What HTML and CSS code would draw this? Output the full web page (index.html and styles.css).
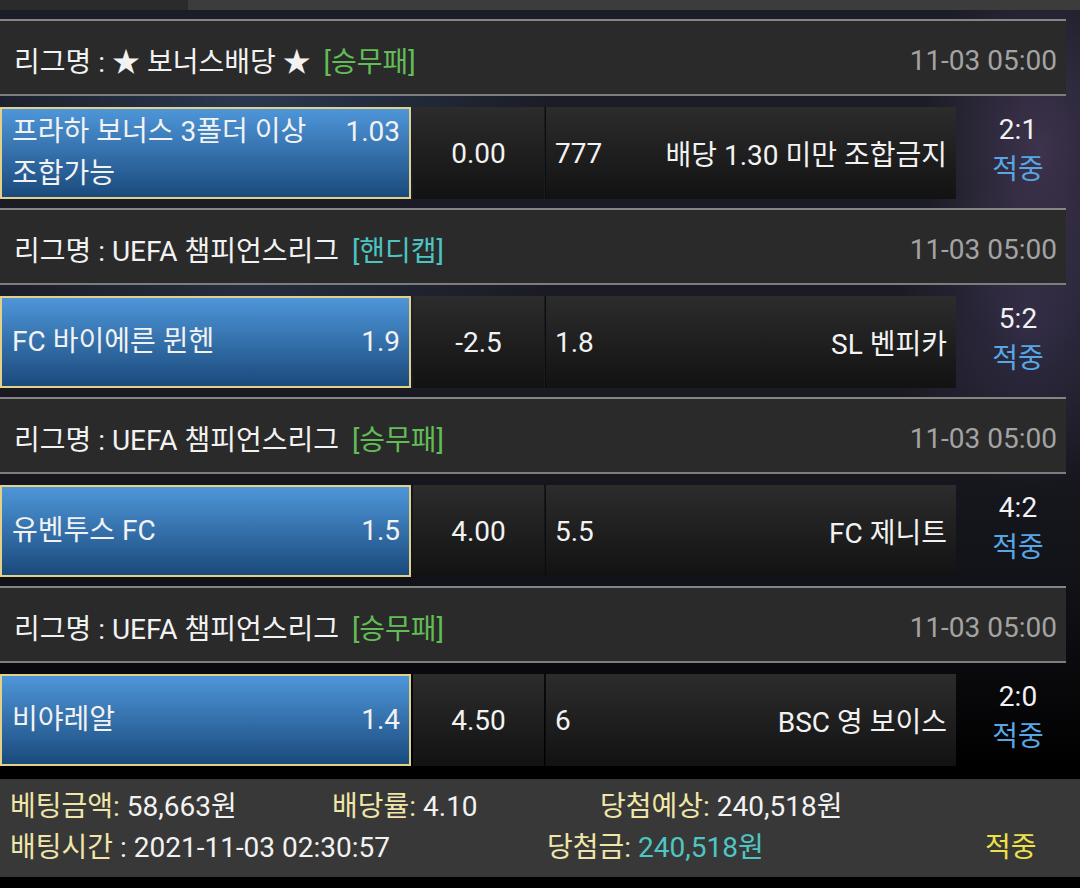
FILE: index.html
```html
<!DOCTYPE html>
<html lang="ko">
<head>
<meta charset="utf-8">
<title>베팅내역</title>
<link rel="stylesheet" href="styles.css">
</head>
<body>
<div class="topbar"><div class="tb-left"></div><div class="tb-right"></div></div>
<div class="list">
  <section class="game">
    <div class="league"><span class="lname">리그명 : ★ 보너스배당 ★ <span class="type green">[승무패]</span></span><span class="time">11-03 05:00</span></div>
    <div class="row">
      <div class="pick"><div class="pick-text"><span class="odds">1.03</span>프라하 보너스 3폴더 이상 조합가능</div></div>
      <div class="cell mid">0.00</div>
      <div class="cell away"><span>777</span><span>배당 1.30 미만 조합금지</span></div>
      <div class="result"><div>2:1</div><div class="hit">적중</div></div>
    </div>
  </section>
  <section class="game">
    <div class="league"><span class="lname">리그명 : UEFA 챔피언스리그 <span class="type teal">[핸디캡]</span></span><span class="time">11-03 05:00</span></div>
    <div class="row">
      <div class="pick"><div class="pick-text"><span class="odds">1.9</span>FC 바이에른 뮌헨</div></div>
      <div class="cell mid">-2.5</div>
      <div class="cell away"><span>1.8</span><span>SL 벤피카</span></div>
      <div class="result"><div>5:2</div><div class="hit">적중</div></div>
    </div>
  </section>
  <section class="game">
    <div class="league"><span class="lname">리그명 : UEFA 챔피언스리그 <span class="type green">[승무패]</span></span><span class="time">11-03 05:00</span></div>
    <div class="row">
      <div class="pick"><div class="pick-text"><span class="odds">1.5</span>유벤투스 FC</div></div>
      <div class="cell mid">4.00</div>
      <div class="cell away"><span>5.5</span><span>FC 제니트</span></div>
      <div class="result"><div>4:2</div><div class="hit">적중</div></div>
    </div>
  </section>
  <section class="game">
    <div class="league"><span class="lname">리그명 : UEFA 챔피언스리그 <span class="type green">[승무패]</span></span><span class="time">11-03 05:00</span></div>
    <div class="row">
      <div class="pick"><div class="pick-text"><span class="odds">1.4</span>비야레알</div></div>
      <div class="cell mid">4.50</div>
      <div class="cell away"><span>6</span><span>BSC 영 보이스</span></div>
      <div class="result"><div>2:0</div><div class="hit">적중</div></div>
    </div>
  </section>
</div>
<div class="summary">
  <div class="s-row">
    <div class="s-a1"><span class="lbl">베팅금액:</span> 58,663원</div>
    <div class="s-b1"><span class="lbl">배당률:</span> 4.10</div>
    <div><span class="lbl">당첨예상:</span> 240,518원</div>
  </div>
  <div class="s-row">
    <div class="s-a2"><span class="lbl">배팅시간</span> : 2021-11-03 02:30:57</div>
    <div class="s-b2"><span class="lbl">당첨금:</span> <span class="win">240,518원</span></div>
    <div class="status">적중</div>
  </div>
</div>
</body>
</html>
```
FILE: styles.css
```css
html, body {
  margin: 0;
  padding: 0;
}
body {
  width: 1080px;
  height: 888px;
  overflow: hidden;
  font-family: Roboto, "Noto Sans CJK KR", sans-serif;
  font-size: 28px;
  color: #f2f2f2;
  background:
    radial-gradient(ellipse 120px 200px at 1040px 150px, rgba(90, 70, 110, 0.55), transparent),
    radial-gradient(ellipse 140px 160px at 1030px 330px, rgba(70, 60, 100, 0.5), transparent),
    radial-gradient(ellipse 300px 60px at 250px 100px, rgba(60, 90, 130, 0.45), transparent),
    radial-gradient(ellipse 300px 60px at 250px 290px, rgba(60, 80, 110, 0.35), transparent),
    linear-gradient(to bottom, #1b1d27 0%, #1a1a22 45%, #121219 65%, #060608 80%, #000 86%);
}
.topbar {
  display: flex;
  height: 10px;
}
.tb-left {
  width: 188px;
  background: #2b2b2b;
}
.tb-right {
  flex: 1;
  background: #3c3c3c;
}
.list {
  padding-top: 9px;
}
.game + .game {
  margin-top: 9px;
}
.league {
  width: 1066px;
  height: 77px;
  box-sizing: border-box;
  border-top: 2px solid #858585;
  border-bottom: 2px solid #7d7d7d;
  background: #2a2a2a;
  display: flex;
  align-items: center;
  justify-content: space-between;
  padding: 5px 9px 0 14px;
}
.type {
  margin-left: 6px;
}
.green {
  color: #62bd57;
}
.teal {
  color: #4cc4c0;
}
.time {
  color: #a3a3a3;
}
.row {
  display: flex;
  margin-top: 11px;
  height: 92px;
}
.pick {
  width: 411px;
  box-sizing: border-box;
  border: 2px solid #e3d18a;
  background: linear-gradient(to bottom, #4e96d9, #1a4a7c);
  display: flex;
  align-items: center;
  padding: 0 9px 0 10px;
}
.pick-text {
  flex: 1;
  line-height: 42px;
  word-break: keep-all;
}
.odds {
  float: right;
  margin-left: 12px;
}
.cell {
  background: linear-gradient(to bottom, #2c2c2c, #121212);
  display: flex;
  align-items: center;
}
.mid {
  width: 131px;
  margin-left: 2px;
  justify-content: center;
}
.away {
  width: 411px;
  box-sizing: border-box;
  border-left: 1px solid #0c0c0c;
  margin-left: 1px;
  justify-content: space-between;
  padding: 0 9px 0 9px;
}
.result {
  flex: 1;
  display: flex;
  flex-direction: column;
  align-items: center;
  justify-content: center;
  line-height: 40px;
  padding-bottom: 6px;
}
.hit {
  color: #56a7e4;
}
.summary {
  margin-top: 13px;
  height: 98px;
  box-sizing: border-box;
  background: #383838;
  padding: 7px 10px 0 10px;
  line-height: 41px;
}
.s-row {
  display: flex;
}
.s-a1 {
  width: 322px;
}
.s-b1 {
  width: 268px;
}
.s-a2 {
  width: 537px;
}
.s-b2 {
  width: 438px;
}
.lbl {
  color: #efe6a8;
}
.win {
  color: #4ec6c4;
}
.status {
  color: #eee04a;
}
```
